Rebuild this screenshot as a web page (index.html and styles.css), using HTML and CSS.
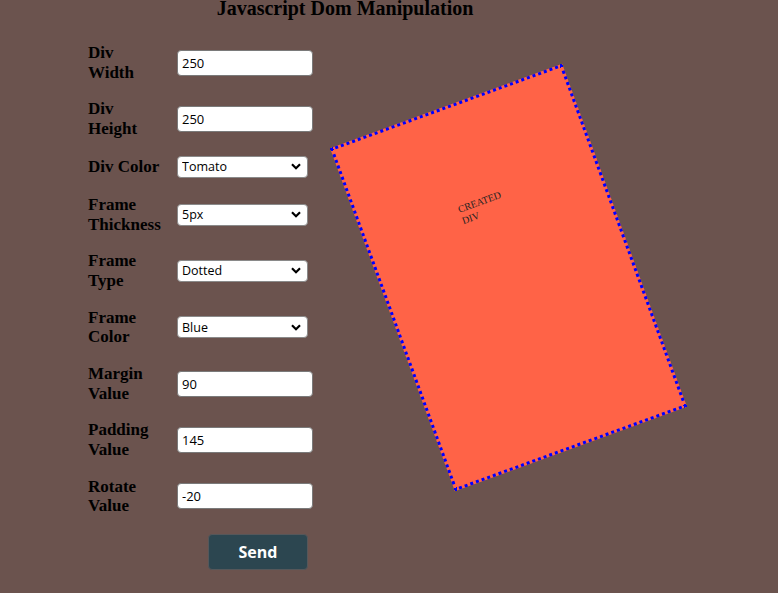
FILE: index.html
```html
<!DOCTYPE html>
<html>
<head>
<meta charset="utf-8">
<link rel="stylesheet" href="styles.css">
</head>
<body>
<h1 class="title">Javascript Dom Manipulation</h1>
<div class="main">
  <form class="form">
    <label class="lbl">Div Width</label>
    <input class="txt" type="text" value="250">
    <label class="lbl">Div Height</label>
    <input class="txt" type="text" value="250">
    <label class="lbl">Div Color</label>
    <select class="sel"><option>Tomato</option></select>
    <label class="lbl">Frame Thickness</label>
    <select class="sel"><option>5px</option></select>
    <label class="lbl">Frame Type</label>
    <select class="sel"><option>Dotted</option></select>
    <label class="lbl">Frame Color</label>
    <select class="sel"><option>Blue</option></select>
    <label class="lbl">Margin Value</label>
    <input class="txt" type="text" value="90">
    <label class="lbl">Padding Value</label>
    <input class="txt" type="text" value="145">
    <label class="lbl">Rotate Value</label>
    <input class="txt" type="text" value="-20">
    <span></span>
    <button class="send" type="button">Send</button>
  </form>
  <div class="stage">
    <div class="created"><span class="created-text">CREATED DIV</span></div>
  </div>
</div>
</body>
</html>
```
FILE: styles.css
```css
html, body {
  margin: 0;
  padding: 0;
}
body {
  background: #6b534e;
  font-family: "Liberation Serif", "Times New Roman", serif;
  color: #000;
  width: 778px;
  height: 593px;
  overflow: hidden;
}
.title {
  margin: -2px 0 0 0;
  width: 690px;
  text-align: center;
  font-size: 20px;
  font-weight: bold;
  line-height: 21px;
}
.main {
  display: flex;
  align-items: flex-start;
}
.form {
  padding: 24px 0 0 88px;
  display: grid;
  grid-template-columns: 74px 136px;
  column-gap: 15px;
  row-gap: 17.2px;
  align-items: center;
}
.lbl {
  font-size: 17px;
  font-weight: bold;
  line-height: 19.6px;
}
.txt {
  box-sizing: border-box;
  width: 136px;
  height: 26px;
  margin: 0;
  padding: 0 4px;
  border: 1px solid #7a7a7a;
  border-radius: 4px;
  background: #fff;
  font-family: "Open Sans", sans-serif;
  font-size: 13px;
  color: #000;
}
.sel {
  box-sizing: border-box;
  width: 131px;
  height: 22px;
  margin: 0;
  padding: 0 4px;
  border: 1px solid #8a8a8a;
  border-radius: 4px;
  -webkit-appearance: none;
  appearance: none;
  background: #fff url("data:image/svg+xml;utf8,<svg xmlns='http://www.w3.org/2000/svg' width='10' height='7' viewBox='0 0 10 7'><path d='M1 1.2 L5 5.2 L9 1.2' fill='none' stroke='black' stroke-width='2.2'/></svg>") no-repeat right 6px center;
  font-family: "Open Sans", sans-serif;
  font-size: 12.5px;
  color: #000;
}
.send {
  grid-column: 2;
  margin: 1px 0 0 31px;
  width: 100px;
  height: 36px;
  background: #2c4650;
  border: 1px solid #55575a;
  border-radius: 4px;
  color: #fff;
  font-family: "Open Sans", sans-serif;
  font-weight: bold;
  font-size: 16px;
}
.stage {
  margin: 75.5px 0 0 71.5px;
}
.created {
  box-sizing: border-box;
  width: 247px;
  height: 365px;
  background: #ff6347;
  border: 3px dotted #0000ff;
  transform: rotate(-20deg);
  padding: 93px 0 0 96.5px;
}
.created-text {
  display: block;
  width: 50px;
  font-family: "Liberation Serif", serif;
  font-size: 10px;
  line-height: 11.5px;
  color: #222;
}
```
